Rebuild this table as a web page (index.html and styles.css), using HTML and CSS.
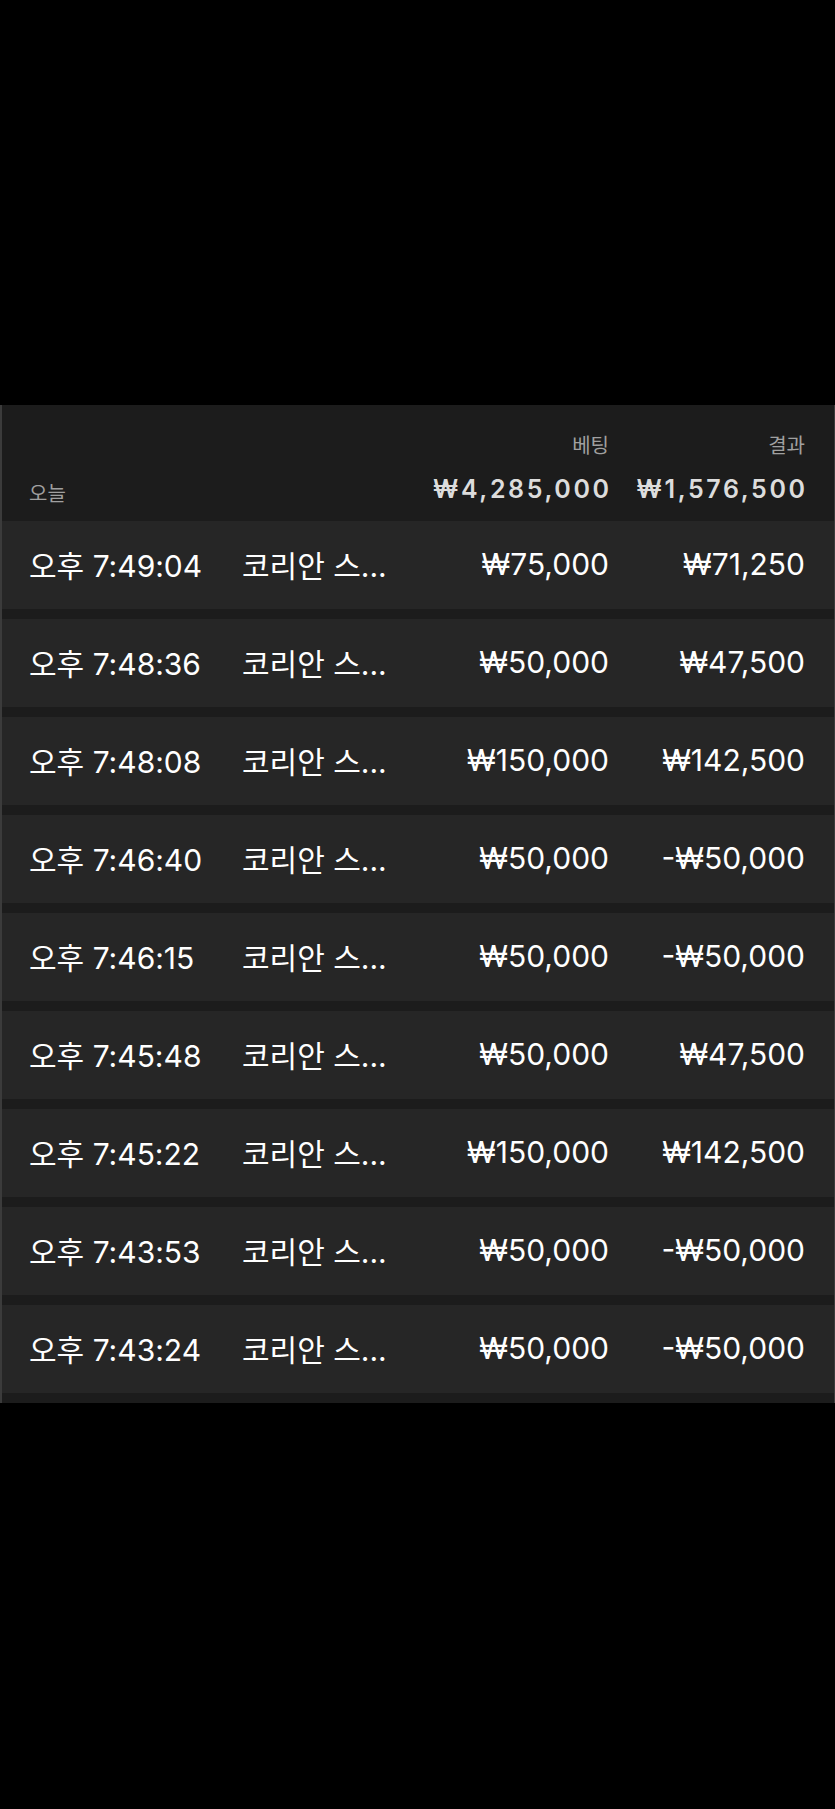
FILE: index.html
```html
<!DOCTYPE html>
<html lang="ko">
<head>
<meta charset="utf-8">
<title>베팅 내역</title>
<link rel="stylesheet" href="styles.css">
</head>
<body>
<main class="screen">
  <section class="panel">
    <header class="summary">
      <span class="label label-bet">베팅</span>
      <span class="label label-result">결과</span>
      <span class="day">오늘</span>
      <span class="total total-bet">₩4,285,000</span>
      <span class="total total-result">₩1,576,500</span>
    </header>
    <ul class="rows">
      <li class="row"><span class="time">오후 7:49:04</span><span class="game">코리안 스...</span><span class="amt">₩75,000</span><span class="amt">₩71,250</span></li>
      <li class="row"><span class="time">오후 7:48:36</span><span class="game">코리안 스...</span><span class="amt">₩50,000</span><span class="amt">₩47,500</span></li>
      <li class="row"><span class="time">오후 7:48:08</span><span class="game">코리안 스...</span><span class="amt">₩150,000</span><span class="amt">₩142,500</span></li>
      <li class="row"><span class="time">오후 7:46:40</span><span class="game">코리안 스...</span><span class="amt">₩50,000</span><span class="amt">-₩50,000</span></li>
      <li class="row"><span class="time">오후 7:46:15</span><span class="game">코리안 스...</span><span class="amt">₩50,000</span><span class="amt">-₩50,000</span></li>
      <li class="row"><span class="time">오후 7:45:48</span><span class="game">코리안 스...</span><span class="amt">₩50,000</span><span class="amt">₩47,500</span></li>
      <li class="row"><span class="time">오후 7:45:22</span><span class="game">코리안 스...</span><span class="amt">₩150,000</span><span class="amt">₩142,500</span></li>
      <li class="row"><span class="time">오후 7:43:53</span><span class="game">코리안 스...</span><span class="amt">₩50,000</span><span class="amt">-₩50,000</span></li>
      <li class="row"><span class="time">오후 7:43:24</span><span class="game">코리안 스...</span><span class="amt">₩50,000</span><span class="amt">-₩50,000</span></li>
    </ul>
  </section>
</main>
</body>
</html>
```

FILE: styles.css
```css
html, body {
  margin: 0;
  padding: 0;
  background: #000;
}

body {
  font-family: "Inter", "Noto Sans CJK KR", sans-serif;
  color: #fff;
}

.screen {
  padding-top: 405px;
  min-height: 1809px;
  box-sizing: border-box;
}

.panel {
  background: #1c1c1c;
  border-left: 2px solid #3b3b3b;
  border-right: 1px solid #3b3b3b;
  box-sizing: border-box;
  width: 835px;
}

.summary,
.row {
  display: grid;
  grid-template-columns: 213px 1fr 200px 196px;
  padding: 0 29px 0 27px;
  align-items: center;
}

.summary {
  height: 116px;
  box-sizing: border-box;
  padding-top: 31px;
  grid-template-rows: 20px 25px;
  row-gap: 21px;
  align-content: start;
}

.label {
  font-size: 20px;
  line-height: 1;
  color: #a0a0a0;
  text-align: right;
}

.label-bet { grid-column: 3; grid-row: 1; }
.label-result { grid-column: 4; grid-row: 1; }

.day {
  grid-column: 1;
  grid-row: 2;
  font-size: 20px;
  line-height: 1;
  color: #a0a0a0;
  align-self: end;
  margin-bottom: -2px;
}

.total {
  grid-row: 2;
  font-size: 25px;
  line-height: 1;
  font-weight: 600;
  letter-spacing: 2.6px;
  margin-right: -2.6px;
  color: #dcdcdc;
  text-align: right;
  white-space: nowrap;
}

.total-bet { grid-column: 3; }
.total-result { grid-column: 4; }

.rows {
  list-style: none;
  margin: 0;
  padding: 0 0 10px;
  display: flex;
  flex-direction: column;
  gap: 10px;
}

.row {
  height: 88px;
  box-sizing: border-box;
  padding-bottom: 3px;
  background: #262626;
  font-size: 30px;
  color: #fff;
}

.time,
.game {
  white-space: nowrap;
}

.amt {
  text-align: right;
  white-space: nowrap;
}
```
